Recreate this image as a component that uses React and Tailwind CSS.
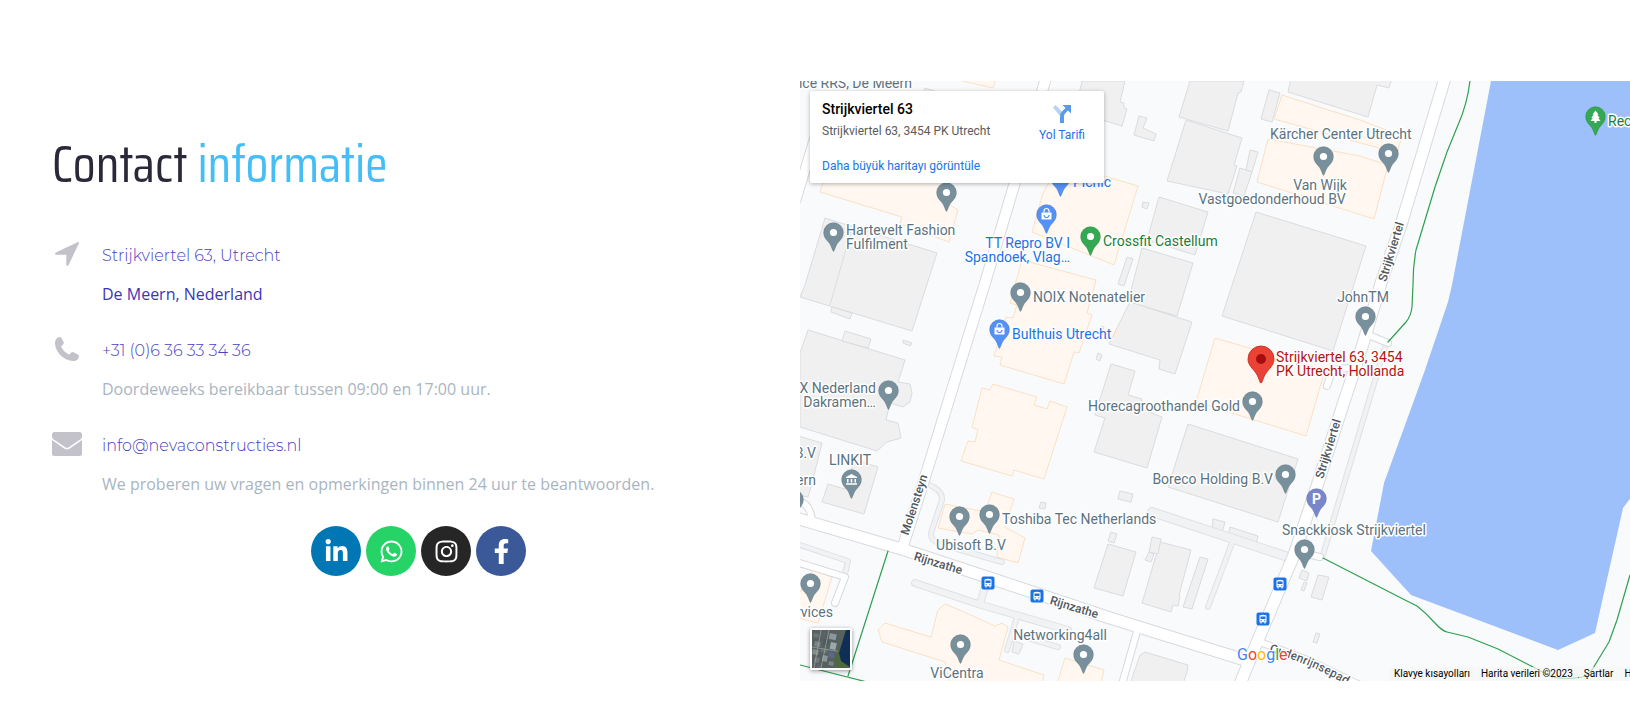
import React from "react";
import { FaFacebookF, FaInstagram, FaLinkedinIn, FaWhatsapp } from "react-icons/fa";

const grayBuildings = [
  "1082,81 1125,81 1120,102 1124,103 1124,108 1127,109 1122,126 1075,112",
  "825,218 937,253 912,331 800,297 805,285",
  "832,307 852,313 850,319 831,312",
  "808,330 905,360 898,382 910,384 912,393 910,402 903,407 890,403 886,420 898,423 901,438 887,442 877,451 800,427 800,353",
  "845,331 871,339 868,348 842,341",
  "903,340 912,343 910,346 903,343",
  "798,436 822,443 811,487 808,497 798,495",
  "855,460 878,467 864,514 822,502 828,484 845,489",
  "925,88 935,91 933,95 924,92",
  "1190,81 1244,81 1241,92 1238,93 1228,131 1179,117",
  "1186,120 1242,138 1234,165 1237,166 1228,194 1167,181",
  "1269,90 1280,93 1272,122 1261,119",
  "1291,78 1392,78 1389,88 1377,85 1368,117 1288,92",
  "1250,150 1258,152 1252,172 1246,170",
  "1240,168 1252,172 1244,196 1233,193",
  "1139,116 1147,118 1143,128 1156,134 1154,141 1134,135",
  "1143,202 1149,203 1147,209 1142,207",
  "1159,197 1208,212 1195,255 1147,240",
  "1142,248 1193,263 1177,316 1128,302",
  "1130,302 1192,322 1175,374 1159,369 1160,360 1109,344",
  "1127,257 1133,259 1124,286 1118,284",
  "1111,364 1135,371 1128,395 1142,399 1139,408 1162,417 1147,468 1094,452 1105,418 1095,415",
  "1101,326 1104,327 1102,333 1099,332",
  "1098,353 1102,355 1100,361 1096,359",
  "1256,212 1366,246 1333,351 1222,316",
  "1188,424 1298,459 1278,522 1168,487",
  "1108,544 1136,552 1123,596 1094,588",
  "1160,542 1191,550 1179,595 1180,597 1178,606 1173,605 1171,612 1142,603",
  "1152,537 1161,539 1158,554 1149,552",
  "1149,552 1154,554 1151,562 1145,560",
  "1200,557 1208,559 1192,609 1183,607",
  "1120,491 1133,494 1131,502 1118,499",
  "1111,532 1117,534 1114,543 1108,541",
  "1213,519 1225,522 1222,533 1212,530",
  "1230,527 1258,536 1256,544 1228,535",
  "1318,575 1329,577 1322,600 1311,597",
  "1302,570 1309,573 1307,581 1299,578",
  "1304,582 1307,583 1304,591 1301,590",
  "1316,633 1320,634 1317,643 1313,642",
  "1145,652 1188,665 1187,672 1183,684 1130,684 1140,655",
  "1041,502 1046,503 1045,509 1039,508",
  "1014,641 1023,644 1019,654 1012,652",
];

const shopBuildings = [
  "823,183 820,192 902,217 900,224 949,242 958,210 947,203 950,170",
  "962,78 962,81 993,88 996,78",
  "1043,193 1060,163 1138,186 1114,265 1032,232",
  "1022,260 1096,280 1087,313 1092,315 1079,353 1074,352 1064,384 1000,365 1002,357 994,356 1006,317 1013,318 1017,305 1010,303",
  "993,384 1037,397 1034,405 1047,409 1050,401 1067,407 1044,479 1014,470 1012,476 961,461 968,441 975,442 978,430 972,427 982,388 990,390",
  "1282,95 1360,120 1402,136 1397,153 1274,119",
  "1268,139 1360,156 1388,165 1374,219 1257,182",
  "1215,338 1325,370 1306,436 1196,402",
  "992,492 1014,499 1005,527 1025,538 1018,563 997,557 999,535 978,530 972,534 938,528 945,504 985,512",
  "813,570 832,577 818,623 798,618 798,595 808,580",
  "885,623 931,637 938,610 945,604 955,608 995,626 1002,623 1008,627 999,660 1044,675 1042,684 950,684 945,662 882,642 878,630",
  "1065,658 1104,670 1101,684 1057,684",
];

const lanes = [
  { d: "M800 545 L848 561 L845 574", w: 4 },
  { d: "M927 484 Q943 490 942 500 L931 533 Q930 540 940 544 L1002 562", w: 4 },
  { d: "M915 583 L978 604 L1068 630", w: 6 },
  { d: "M987 580 L980 604", w: 6 },
  { d: "M1017 617 L1007 650", w: 4 },
  { d: "M1014 634 L1058 647", w: 4 },
  { d: "M1152 512 L1288 557", w: 8 },
  { d: "M1232 543 L1208 607", w: 4 },
  { d: "M1385 347 L1344 484 L1323 555", w: 4 },
];

const streets = [
  { d: "M1046 78 L985 283 L921 490 L903 546", w: 10 },
  { d: "M796 518 L905 550 L1002 582 L1110 618 L1248 661", w: 11 },
  { d: "M1445 78 L1401 225 L1381 283 L1362 347 L1339 417 L1317 486 L1294 555 L1258 640 L1240 684", w: 11 },
  { d: "M1260 642 L1310 661 L1358 684", w: 6 },
  { d: "M1138 628 L1122 684", w: 6 },
  { d: "M796 501 Q810 502 812 520", w: 6 },
  { d: "M796 562 L845 577 L835 603", w: 6 },
  { d: "M1366 334 L1388 343", w: 6 },
  { d: "M1348 368 L1332 370 L1327 386", w: 6 },
  { d: "M1297 552 L1320 557", w: 6 },
  { d: "M814 140 L796 200", w: 9 },
];

const greenPaths = [
  "M1470 81 Q1467 105 1458 125 L1447 152 L1435 187 L1416 250 Q1413 266 1413 285 L1412 307 Q1411 316 1406 322 L1388 342",
  "M1323 558 L1405 600 L1417 606 Q1426 613 1434 622 Q1442 631 1447 632 L1468 637 L1498 649 L1533 667 L1552 677 Q1566 680 1582 677 Q1590 675 1595 665 L1609 642 L1617 620 L1630 575",
  "M888 551 L848 676",
  "M800 665 L867 682",
];

const tones = {
  gray: { pin: "#78909c", text: "#5b737f" },
  blue: { pin: "#5491f5", text: "#1a73e8" },
  green: { pin: "#34a853", text: "#188038" },
  purple: { pin: "#7986cb", text: "#5b737f" },
};

const pins = [
  [946, 192], [833, 232], [1323, 156], [1388, 153], [1020, 292], [888, 390], [1365, 316], [1252, 401],
  [1285, 474], [959, 516], [989, 514], [810, 583], [960, 644], [1083, 654], [1304, 549], [793, 499],
  [851, 479, "gray", "bank"], [1060, 177, "blue", "bag"], [1046, 214, "blue", "bag"], [999, 329, "blue", "bag"],
  [1090, 236, "green"], [1595, 116, "green", "tree"], [1316, 498, "purple", "parking"],
];

const labels = [
  [912, 88, "end", "ffice RRS, De Meern"],
  [846, 235, "start", "Hartevelt Fashion"],
  [846, 249, "start", "Fulfilment"],
  [1073, 187, "start", "Picnic", "blue"],
  [1070, 248, "end", "TT Repro BV I", "blue"],
  [1070, 262, "end", "Spandoek, Vlag…", "blue"],
  [1103, 246, "start", "Crossfit Castellum", "green"],
  [1270, 139, "start", "Kärcher Center Utrecht"],
  [1320, 190, "middle", "Van Wijk"],
  [1272, 204, "middle", "Vastgoedonderhoud BV"],
  [1608, 126, "start", "Recreatieplas", "green"],
  [1033, 302, "start", "NOIX Notenatelier"],
  [1012, 339, "start", "Bulthuis Utrecht", "blue"],
  [876, 393, "end", "VELUX Nederland"],
  [876, 407, "end", "Dakramen…"],
  [816, 458, "end", "B.V"],
  [816, 485, "end", "ern"],
  [850, 465, "middle", "LINKIT"],
  [1363, 302, "middle", "JohnTM"],
  [1240, 411, "end", "Horecagroothandel Gold"],
  [1273, 484, "end", "Boreco Holding B.V"],
  [1002, 524, "start", "Toshiba Tec Netherlands"],
  [971, 550, "middle", "Ubisoft B.V"],
  [1060, 640, "middle", "Networking4all"],
  [957, 678, "middle", "ViCentra"],
  [1282, 535, "start", "Snackkiosk Strijkviertel"],
  [833, 617, "end", "Services"],
];

const streetNames = [
  [918, 506, -72, "Molensteyn"],
  [1395, 253, -73, "Strijkviertel"],
  [1332, 450, -73, "Strijkviertel"],
  [937, 567, 17, "Rijnzathe"],
  [1073, 611, 17, "Rijnzathe"],
];

const busStops = [[988, 583], [1037, 596], [1280, 584], [1263, 619]];

function PinGlyph({ kind }) {
  if (kind === "bag")
    return (
      <g>
        <path d="M-5 -2H5V5H-5Z" fill="#fff" />
        <path d="M-2.5 -2V-3.5A2.5 2.5 0 0 1 2.5 -3.5V-2" fill="none" stroke="#fff" strokeWidth="1.2" />
        <path d="M-2.5 0.5A2.5 2.5 0 0 0 2.5 0.5" fill="none" stroke="#5491f5" strokeWidth="1.2" />
      </g>
    );
  if (kind === "bank")
    return <path d="M-5.5 -2.5L0 -5.5L5.5 -2.5V-1.5H-5.5ZM-4.5 -0.5H-3V3H-4.5ZM-0.8 -0.5H0.8V3H-0.8ZM3 -0.5H4.5V3H3ZM-5.5 3.8H5.5V5.2H-5.5Z" fill="#fff" />;
  if (kind === "tree") return <path d="M0 -6L3 -2H1.8L4.2 1.5H2.8L5 4.5H1V6.5H-1V4.5H-5L-2.8 1.5H-4.2L-1.8 -2H-3Z" fill="#fff" />;
  if (kind === "parking")
    return <text y="5" textAnchor="middle" fill="#fff" className="text-[14px] font-bold">P</text>;
  return <circle r="3.6" fill="#fff" />;
}

function Pin({ x, y, tone = "gray", kind }) {
  return (
    <g transform={`translate(${x + 0.5} ${y + 0.5})`}>
      <path
        d="M0 19C-1.2 19 -1.6 13.5 -5.5 9.3C-8 6.6 -10 4 -10 0A10 10 0 0 1 10 0C10 4 8 6.6 5.5 9.3C1.6 13.5 1.2 19 0 19Z"
        fill={tones[tone].pin}
        stroke="#000"
        strokeOpacity="0.12"
        strokeWidth="0.8"
      />
      <PinGlyph kind={kind} />
    </g>
  );
}

const halo = { stroke: "#fff", strokeWidth: 3, strokeLinejoin: "round", paintOrder: "stroke" };

function MapDrawing() {
  return (
    <svg
      viewBox="800 81 830 600"
      preserveAspectRatio="xMinYMin slice"
      className="block h-full w-full font-['Roboto',sans-serif]"
      role="img"
      aria-label="Strijkviertel 63"
    >
      <rect x="800" y="81" width="830" height="600" fill="#f8fafc" />
      <polygon
        points="1491,81 1452,285 1448,302 1425,370 1384,483 1371,551 1411,595 1558,650 1595,633 1623,508 1632,496 1632,81"
        fill="#9dc0fa"
      />
      <g fill="#f0f0f0" stroke="#dadce0" strokeWidth="1">
        {grayBuildings.map((p) => <polygon key={p} points={p} />)}
        <path d="M852 228L830 305" />
      </g>
      <g fill="#fff7f0" stroke="#fce0c4" strokeWidth="1">
        {shopBuildings.map((p) => <polygon key={p} points={p} />)}
      </g>
      <g fill="none" strokeLinecap="round" strokeLinejoin="round">
        {lanes.map((r) => <path key={r.d} d={r.d} stroke="#dfe1e5" strokeWidth={r.w + 2} />)}
        {lanes.map((r) => <path key={r.d} d={r.d} stroke="#f1f2f4" strokeWidth={r.w} />)}
        {streets.map((r) => <path key={r.d} d={r.d} stroke="#d8dade" strokeWidth={r.w + 2} />)}
        {streets.map((r) => <path key={r.d} d={r.d} stroke="#fff" strokeWidth={r.w} />)}
        {greenPaths.map((d) => <path key={d} d={d} stroke="#2fa04f" strokeWidth="1.2" />)}
      </g>
      <g className="text-[12px] font-medium" fill="#50575e" textAnchor="middle" {...halo}>
        {streetNames.map(([x, y, a, name]) => (
          <text key={`${x}-${y}`} transform={`translate(${x} ${y}) rotate(${a})`}>{name}</text>
        ))}
        <path id="oudenrijnsepad" d="M1269 652Q1312 664 1352 688" fill="none" stroke="none" />
        <text textAnchor="start"><textPath href="#oudenrijnsepad">Oudenrijnsepad</textPath></text>
      </g>
      {busStops.map(([x, y]) => (
        <g key={`${x}-${y}`} transform={`translate(${x} ${y})`}>
          <rect x="-6.5" y="-6.5" width="13" height="13" rx="2" fill="#1a73e8" />
          <path d="M-3.5 -3.5Q0 -5 3.5 -3.5V3.2H2.6V4.4H1.4V3.2H-1.4V4.4H-2.6V3.2H-3.5Z" fill="#fff" />
          <path d="M-2.5 -2.5H2.5V0H-2.5ZM-2.4 1.2H-1.2V2.2H-2.4ZM1.2 1.2H2.4V2.2H1.2Z" fill="#1a73e8" />
        </g>
      ))}
      {pins.map(([x, y, tone, kind]) => <Pin key={`${x}-${y}`} x={x} y={y} tone={tone} kind={kind} />)}
      <g className="text-[14px]" {...halo}>
        {labels.map(([x, y, anchor, text, tone = "gray"]) => (
          <text key={`${x}-${y}`} x={x} y={y} textAnchor={anchor} fill={tones[tone].text}>{text}</text>
        ))}
        <text x="1276" y="362" fill="#b31412">Strijkviertel 63, 3454</text>
        <text x="1276" y="376" fill="#b31412">PK Utrecht, Hollanda</text>
      </g>
      <g transform="translate(1261 359)">
        <path
          d="M0 24C-1.6 24 -1.8 17.5 -6.6 12C-10 8 -13 5 -13 0A13 13 0 0 1 13 0C13 5 10 8 6.6 12C1.8 17.5 1.6 24 0 24Z"
          fill="#ea4335"
          stroke="#c5221f"
          strokeWidth="0.8"
        />
        <circle r="5" fill="#a50e0e" />
      </g>
      <text x="1237" y="660" className="text-[16px]" stroke="#fff" strokeWidth="2" paintOrder="stroke">
        <tspan fill="#4285f4">G</tspan>
        <tspan fill="#ea4335">o</tspan>
        <tspan fill="#fbbc04">o</tspan>
        <tspan fill="#4285f4">g</tspan>
        <tspan fill="#34a853">l</tspan>
        <tspan fill="#ea4335">e</tspan>
      </text>
    </svg>
  );
}

function SatelliteThumb() {
  const roofs = [
    [2, 3, 5, 4, "#6d7478"], [9, 1, 6, 5, "#59636a"], [18, 3, 7, 6, "#8b969e"], [3, 11, 6, 5, "#7b8287"],
    [12, 9, 5, 6, "#4f5a5d"], [19, 12, 6, 7, "#9aa6b0"], [1, 19, 6, 5, "#858b8e"], [9, 18, 7, 4, "#66717a"],
    [17, 22, 6, 5, "#5c6590"], [3, 27, 5, 5, "#717a7c"], [11, 25, 5, 6, "#8e9699"], [17, 31, 5, 4, "#78838c"],
    [5, 34, 6, 4, "#5f696b"],
  ];
  return (
    <svg viewBox="0 0 38 38" className="block h-full w-full" aria-hidden="true">
      <rect width="38" height="38" fill="#566160" />
      {roofs.map(([x, y, w, h, c]) => (
        <rect key={`${x}-${y}`} x={x} y={y} width={w} height={h} fill={c} transform={`rotate(12 ${x} ${y})`} />
      ))}
      <path d="M0 17L30 22M9 0L2 38M17 0L9 38" stroke="#a3a8a5" strokeWidth="0.7" />
      <path d="M33 0L30 12L22 30L24 38H38V0Z" fill="#4d6a3c" />
      <path d="M34 0L27 23L29 31L38 37V0Z" fill="#0f2f57" />
    </svg>
  );
}

function MapPanel() {
  return (
    <section className="relative h-[600px] overflow-hidden font-['Roboto',sans-serif]">
      <MapDrawing />
      <div className="absolute top-[10px] left-[10px] flex h-[92px] w-[294px] justify-between rounded-xs bg-white pt-2 pr-[19px] pl-3 shadow-[0_1px_4px_rgba(0,0,0,0.3)]">
        <div className="flex flex-col">
          <h2 className="text-[14px] leading-5 font-medium text-black">Strijkviertel 63</h2>
          <p className="mt-1 text-[12px] leading-4 text-[#5b5b5b]">Strijkviertel 63, 3454 PK Utrecht</p>
          <a href="#map" className="mt-[19px] text-[12px] leading-4 text-[#1a73e8]">Daha büyük haritayı görüntüle</a>
        </div>
        <a href="#directions" className="flex flex-col items-center gap-1 pt-1 text-[12px] leading-4 text-[#1a73e8]">
          <svg viewBox="0 0 20 20" className="h-5 w-5" aria-hidden="true">
            <path d="M1 4.5L3.5 2L11 9.5L8 13Z" fill="#b6d2f5" />
            <path d="M8 20V13.5Q8 10.5 10 8.5L13.5 5L10.5 2H19V10.5L16 7.5L13 10.5Q12 11.5 12 13.5V20Z" fill="#5c9ae8" />
          </svg>
          Yol Tarifi
        </a>
      </div>
      <button
        type="button"
        aria-label="Uydu"
        className="absolute bottom-[11px] left-[10px] h-[42px] w-[42px] rounded-xs border-2 border-white shadow-[0_1px_4px_rgba(0,0,0,0.4)]"
      >
        <SatelliteThumb />
      </button>
      <div className="absolute bottom-0 left-[589px] flex h-[14px] gap-px text-[10px] leading-[14px] whitespace-nowrap text-black">
        <button type="button" className="bg-[#f5f5f5]/70 px-[5px]">Klavye kısayolları</button>
        <span className="bg-[#f5f5f5]/70 px-[5px]">Harita verileri ©2023</span>
        <a href="#terms" className="bg-[#f5f5f5]/70 px-[5px]">Şartlar</a>
        <a href="#report" className="bg-[#f5f5f5]/70 px-[5px]">Harita hatası bildirin</a>
      </div>
    </section>
  );
}

function ArrowIcon() {
  return (
    <svg viewBox="0 0 24 24" className="h-6 w-6" fill="currentColor" aria-hidden="true">
      <path d="M22.9 0.1Q24.3 -0.2 23.9 1.2L13.6 23.1Q13.2 24 12.3 24Q11.3 23.9 11.3 22.8V12.7H1.2Q0.1 12.7 0 11.7Q0 10.8 0.9 10.4Z" />
    </svg>
  );
}

function PhoneIcon() {
  return (
    <svg viewBox="0 0 24 24" className="h-6 w-6" fill="currentColor" aria-hidden="true">
      <path d="M3.9 0.2Q5.6 -0.4 6.5 0.9L8.7 5.3Q9.2 6.7 8 7.7L6.6 8.9Q6.1 9.4 6.4 10.1Q8.6 14.8 13.5 17.3Q14.4 17.7 15 17L16.1 15.6Q17.1 14.6 18.5 15.2L22.9 17.4Q24.3 18.3 23.9 19.9Q22.7 24.2 18 24Q10.6 23.3 5.2 17.9Q0 12.2 0 5.7Q0.2 1.5 3.9 0.2Z" />
    </svg>
  );
}

function MailIcon() {
  return (
    <svg viewBox="0 0 30 24" className="h-6 w-[30px]" fill="currentColor" aria-hidden="true">
      <path d="M2.5 0H27.5Q30 0 30 2.5V4.5Q30 6 28.5 7.2L16.8 15.2Q15 16.4 13.2 15.2L1.5 7.2Q0 6 0 4.5V2.5Q0 0 2.5 0Z" />
      <path d="M0 8L12.5 16.7Q15 18.3 17.5 16.7L30 8V21.5Q30 24 27.5 24H2.5Q0 24 0 21.5Z" />
    </svg>
  );
}

function ContactRow({ icon, title, href, children }) {
  return (
    <li className="flex gap-5">
      <span className="-mt-[2px] flex h-6 w-[30px] shrink-0 items-center justify-center text-[#c3c2ca]">{icon}</span>
      <div>
        <a href={href} className="block font-['Montserrat','Inter',sans-serif] text-[16px] leading-6 font-light text-[#4a3fc0]">
          {title}
        </a>
        {children}
      </div>
    </li>
  );
}

const socials = [
  { name: "LinkedIn", Icon: FaLinkedinIn, style: "bg-[#0077b5]" },
  { name: "WhatsApp", Icon: FaWhatsapp, style: "bg-[#25d366]" },
  { name: "Instagram", Icon: FaInstagram, style: "bg-[#262626]" },
  { name: "Facebook", Icon: FaFacebookF, style: "bg-[#3b5998]" },
];

export default function App() {
  return (
    <main className="grid grid-cols-[80fr_83fr] bg-white pt-[81px] pb-[39px] font-['Open_Sans',sans-serif]">
      <section className="pt-[51px] pr-[15px] pl-[52px]">
        <h1 className="font-['Saira_Condensed','Roboto_Condensed','Roboto',sans-serif] text-[52px] leading-[64px] font-normal whitespace-nowrap text-[#2a2839]">
          Contact <span className="text-[#45bdf5]">informatie</span>
        </h1>
        <ul className="mt-12 flex flex-col gap-[33px]">
          <ContactRow icon={<ArrowIcon />} title="Strijkviertel 63, Utrecht" href="#address">
            <p className="mt-[14px] text-[16px] leading-6 text-[#3d35b5]">De Meern, Nederland</p>
          </ContactRow>
          <ContactRow icon={<PhoneIcon />} title="+31 (0)6 36 33 34 36" href="tel:+31636333436">
            <p className="mt-[14px] text-[16px] leading-6 text-[#a9b5bf]">Doordeweeks bereikbaar tussen 09:00 en 17:00 uur.</p>
          </ContactRow>
          <ContactRow icon={<MailIcon />} title="info@nevaconstructies.nl" href="mailto:info@nevaconstructies.nl">
            <p className="mt-[14px] text-[16px] leading-6 text-[#a9b5bf]">
              We proberen uw vragen en opmerkingen binnen 24 uur te beantwoorden.
            </p>
          </ContactRow>
        </ul>
        <nav className="mt-[30px] flex justify-center gap-[5px]">
          {socials.map(({ name, Icon, style }) => (
            <a
              key={name}
              href={`#${name.toLowerCase()}`}
              aria-label={name}
              className={`flex h-[50px] w-[50px] items-center justify-center rounded-full text-white ${style}`}
            >
              <Icon size={25} />
            </a>
          ))}
        </nav>
      </section>
      <MapPanel />
    </main>
  );
}
